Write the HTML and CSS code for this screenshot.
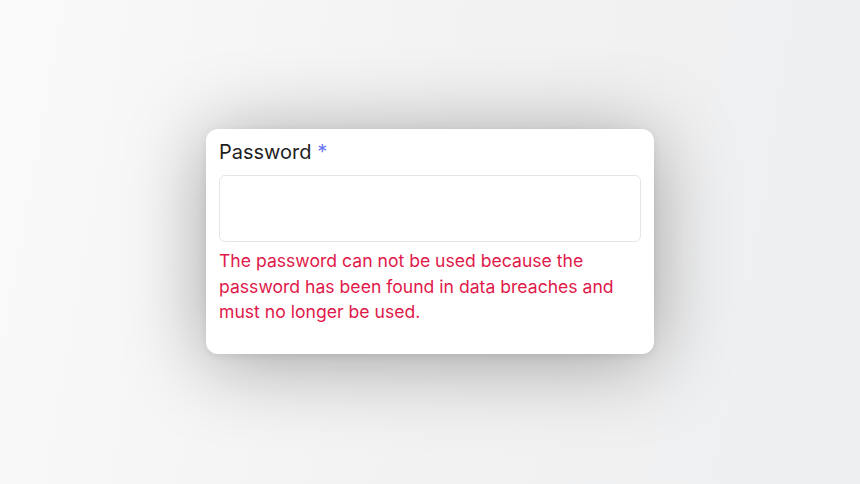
FILE: index.html
```html
<!DOCTYPE html>
<html lang="en">
<head>
<meta charset="utf-8">
<link rel="stylesheet" href="styles.css">
</head>
<body>
<main class="stage">
  <section class="card">
    <label class="label" for="pw">Password <span class="req">*</span></label>
    <input class="input" id="pw" type="password">
    <p class="error">The password can not be used because the password has been found in data breaches and must no longer be used.</p>
  </section>
</main>
</body>
</html>
```
FILE: styles.css
```css
html, body {
  margin: 0;
  height: 100%;
}
body {
  background: linear-gradient(100deg, #fafafa 0%, #f2f2f3 50%, #eeeff0 100%);
  font-family: Inter, "Noto Sans", sans-serif;
}
.stage {
  height: 484px;
  display: flex;
  justify-content: center;
  align-items: flex-start;
  padding-top: 129px;
  box-sizing: border-box;
}
.card {
  width: 448px;
  height: 225px;
  box-sizing: border-box;
  background: #fff;
  border-radius: 12px;
  padding: 9px 13px 0 13px;
  display: flex;
  flex-direction: column;
  box-shadow: 0 8px 80px rgba(0, 0, 0, 0.34), 0 2px 8px rgba(0, 0, 0, 0.08);
}
.label {
  font-size: 20px;
  line-height: 28px;
  color: #1f1f1f;
}
.req {
  color: #6b78f0;
}
.input {
  margin-top: 9px;
  height: 67px;
  box-sizing: border-box;
  border: 1px solid #e6e6e6;
  border-radius: 6px;
  outline: none;
  background: #fff;
}
.error {
  margin: 6px 0 0;
  font-size: 17.6px;
  line-height: 25.5px;
  color: #e0194a;
}
```
